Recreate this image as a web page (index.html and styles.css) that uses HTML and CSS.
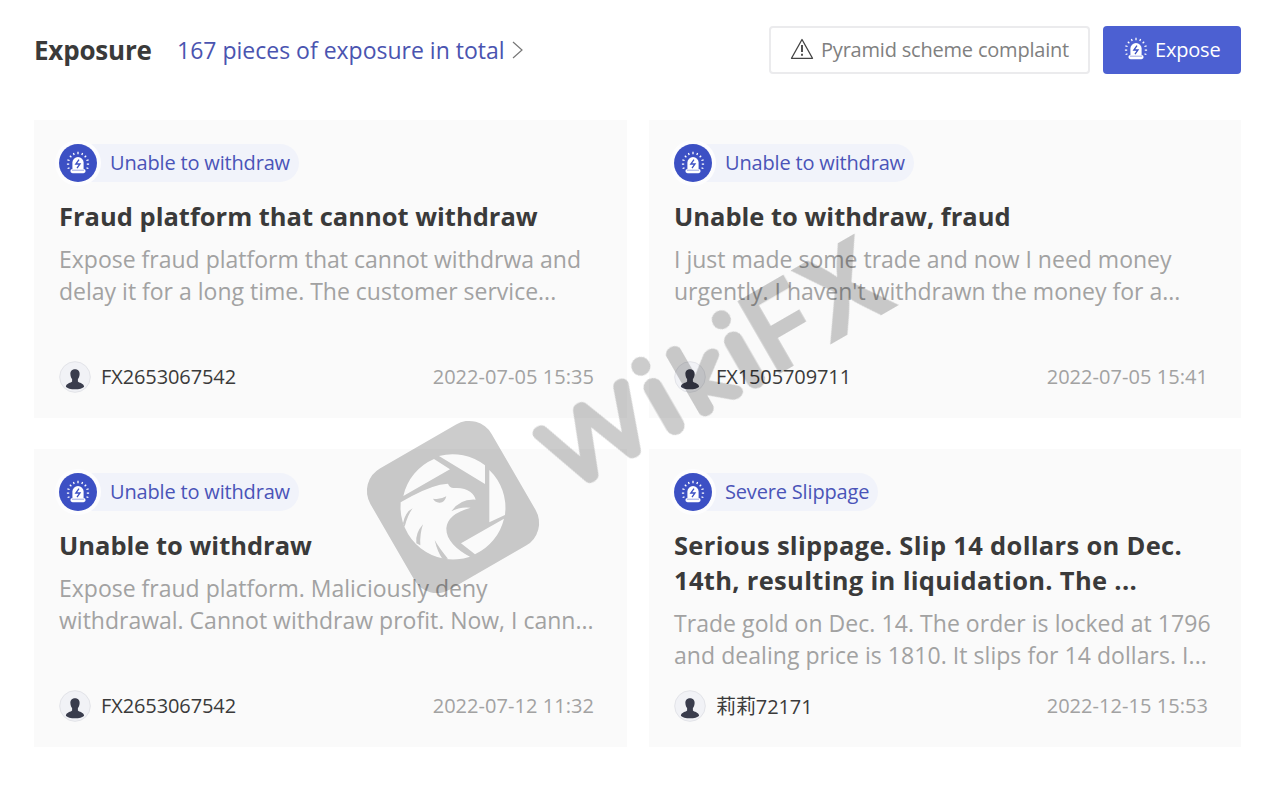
FILE: index.html
```
<!DOCTYPE html>
<html lang="en">
<head>
    <meta charset="UTF-8">
    <meta name="viewport" content="width=device-width, initial-scale=1.0">
    <title>Exposure</title>
    <link rel="stylesheet" href="styles.css">
</head>
<body>
    <svg class="sprite">
        <symbol id="alarm" viewBox="0 0 24 24">
            <path d="M6.400 18v-6.400a5.600 5.600 0 0 1 11.200 0V18z" fill="currentColor"/>
            <rect x="4.400" y="18" width="15.200" height="4.200" rx="2.100" fill="currentColor"/>
            <path d="M6 19.200h12" class="bolt" stroke-width=".5"/>
            <path d="M12 .8v2.400M7.400 1.900l.8 2M16.600 1.900l-.8 2M3.800 4.800l1.600 1.500M20.200 4.800l-1.600 1.500M1.400 8.800l2.200.7M22.600 8.800l-2.200.7M.9 13.200h2.300M23.100 13.200h-2.300M1.600 17.500l1.900-.7M22.400 17.500l-1.900-.7" stroke="currentColor" stroke-width="1.300"/>
            <path class="bolt" d="M13 8.600l-3.200 4.400h4.200l-3 4.200" fill="none" stroke-width="1.300"/>
        </symbol>
        <symbol id="user" viewBox="0 0 32 32">
            <circle cx="16" cy="16" r="15.300" fill="#f1f2f6" stroke="#e2e3e8"/>
            <path d="M16 8.200c3.200 0 4.800 2.200 4.600 5-.1 2.200-.8 3.700-1.700 4.900v2.400c1 1.500 6 1.600 6.200 5.300-2.400 3.400-15.800 3.400-18.200 0 .2-3.700 5.200-3.800 6.200-5.300v-2.400c-.9-1.200-1.600-2.700-1.700-4.900-.2-2.800 1.400-5 4.600-5z" fill="#3a3d4d"/>
        </symbol>
    </svg>

    <div class="page">
        <div class="header">
            <h1>Exposure</h1>
            <a class="total"><span>167 pieces of exposure in total</span>
                <svg width="14" height="20" viewBox="0 0 14 20"><path d="M2 2l9 8-9 8" fill="none" stroke="#777" stroke-width="1.200"/></svg>
            </a>
            <div class="btn complaint">
                <svg width="24" height="22" viewBox="0 0 24 22"><path d="M12 1.500L22.500 20.300h-21z" fill="none" stroke="#444" stroke-width="1.300" stroke-linejoin="round"/><path d="M12 7v7M12 15.800v2" stroke="#333" stroke-width="1.700"/></svg>
                <span>Pyramid scheme complaint</span>
            </div>
            <div class="btn expose">
                <svg class="alarm" width="24" height="24"><use href="#alarm"/></svg>
                <span>Expose</span>
            </div>
        </div>

        <div class="list">
            <div class="card">
                <div class="tag">
                    <i><svg class="alarm" width="24" height="24"><use href="#alarm"/></svg></i>
                    <span>Unable to withdraw</span>
                </div>
                <h2>Fraud platform that cannot withdraw</h2>
                <p>Expose fraud platform that cannot withdrwa and<br>delay it for a long time. The customer service...</p>
                <div class="foot">
                    <svg width="32" height="32"><use href="#user"/></svg>
                    <span class="name">FX2653067542</span>
                    <span class="time">2022-07-05 15:35</span>
                </div>
            </div>
            <div class="card">
                <div class="tag">
                    <i><svg class="alarm" width="24" height="24"><use href="#alarm"/></svg></i>
                    <span>Unable to withdraw</span>
                </div>
                <h2>Unable to withdraw, fraud</h2>
                <p>I just made some trade and now I need money<br>urgently. I haven't withdrawn the money for a...</p>
                <div class="foot">
                    <svg width="32" height="32"><use href="#user"/></svg>
                    <span class="name">FX1505709711</span>
                    <span class="time">2022-07-05 15:41</span>
                </div>
            </div>
            <div class="card">
                <div class="tag">
                    <i><svg class="alarm" width="24" height="24"><use href="#alarm"/></svg></i>
                    <span>Unable to withdraw</span>
                </div>
                <h2>Unable to withdraw</h2>
                <p>Expose fraud platform. Maliciously deny<br>withdrawal. Cannot withdraw profit. Now, I cann...</p>
                <div class="foot">
                    <svg width="32" height="32"><use href="#user"/></svg>
                    <span class="name">FX2653067542</span>
                    <span class="time">2022-07-12 11:32</span>
                </div>
            </div>
            <div class="card long">
                <div class="tag">
                    <i><svg class="alarm" width="24" height="24"><use href="#alarm"/></svg></i>
                    <span>Severe Slippage</span>
                </div>
                <h2>Serious slippage. Slip 14 dollars on Dec.<br>14th, resulting in liquidation. The ...</h2>
                <p>Trade gold on Dec. 14. The order is locked at 1796<br>and dealing price is 1810. It slips for 14 dollars. I...</p>
                <div class="foot">
                    <svg width="32" height="32"><use href="#user"/></svg>
                    <span class="name">莉莉72171</span>
                    <span class="time">2022-12-15 15:53</span>
                </div>
            </div>
        </div>
    </div>

    <svg class="watermark" width="660" height="490" viewBox="355 120 660 490">
        <mask id="eagle" maskUnits="userSpaceOnUse" x="355" y="400" width="200" height="210">
            <rect x="383" y="437" width="140" height="140" rx="26" fill="#fff" transform="rotate(-30 453 507)"/>
            <g transform="translate(360 410) scale(.3333)">
                <path d="M130 258A158 158 0 0 1 222 147L270 178zM237 138A158 158 0 0 1 375 166V222zM388 180A158 158 0 0 1 435 315L388 337zM432 326A158 158 0 0 1 345 433L303 400z"/>
                <path d="M122 277Q190 236 240 224L264 221Q270 235 282 234C322 231 343 250 347 269Q300 266 274 304Q300 289 332 293Q262 312 259 355C258 390 290 420 330 440A158 158 0 0 1 122 277z"/>
                <path d="M219 266Q240 270 259 259Q254 279 238 278Q224 277 219 266zM158 295Q136 306 129 340L134 350Q143 315 158 295zM189 343Q165 370 169 400L181 406Q179 372 189 343zM224 390Q232 425 248 448L264 446Q238 415 224 390z" fill="#fff"/>
            </g>
        </mask>
        <clipPath id="gap">
            <rect x="90" y="-60" width="129" height="130"/>
            <rect x="223.500" y="-13" width="19" height="63" rx="9.500"/>
            <rect x="250" y="-60" width="62" height="130"/>
            <rect x="316.500" y="-13" width="19" height="63" rx="9.500"/>
        </clipPath>
        <g class="ink">
            <rect x="355" y="400" width="200" height="210" mask="url(#eagle)"/>
            <g transform="translate(453 507) rotate(-30)">
                <g clip-path="url(#gap)">
                    <text class="wiki" y="42"><tspan x="109" textLength="101" lengthAdjust="spacingAndGlyphs">W</tspan><tspan class="stem" x="233" text-anchor="middle">i</tspan><tspan x="258" textLength="46" lengthAdjust="spacingAndGlyphs">k</tspan><tspan class="stem" x="326" text-anchor="middle">i</tspan></text>
                </g>
                <circle cx="233" cy="-28" r="9.500"/>
                <circle cx="326" cy="-28" r="9.500"/>
                <text class="fx" x="342" y="48" textLength="65" lengthAdjust="spacingAndGlyphs">F</text>
                <text class="fx" x="405" y="48" textLength="85" lengthAdjust="spacingAndGlyphs">X</text>
            </g>
        </g>
    </svg>
</body>
</html>
```

FILE: styles.css
```
* {
    box-sizing: border-box;
}

body {
    margin: 0;
    background: #fff;
    font-family: "Open Sans", "Noto Sans", "Noto Sans CJK SC", sans-serif;
    color: #3a3a3a;
}

.sprite {
    display: none;
}

.page {
    width: 1268px;
    height: 807px;
    padding: 26px 27px 0 34px;
    overflow: hidden;
}

.header {
    display: flex;
    align-items: center;
    height: 48px;
}

h1, h2, p {
    margin: 0;
}

h1 {
    width: 143px;
    font-size: 26px;
    font-weight: 700;
    letter-spacing: -.2px;
}

.total {
    display: flex;
    align-items: center;
    gap: 6px;
    margin-right: auto;
    font-size: 23px;
    color: #4a54b0;
}

.btn {
    display: flex;
    align-items: center;
    height: 48px;
    padding-bottom: 2px;
    border-radius: 4px;
    font-size: 20px;
    letter-spacing: -.2px;
    white-space: nowrap;
}

.complaint {
    width: 321px;
    margin-right: 13px;
    padding-left: 19px;
    gap: 7px;
    border: 2px solid #ebebed;
    color: #808080;
}

.expose {
    width: 138px;
    padding-left: 21px;
    gap: 7px;
    background: #4c60d2;
    color: #fff;
}

.alarm {
    color: #fff;
}

.bolt {
    stroke: #3c50c4;
}

.list {
    display: grid;
    grid-template-columns: 593px 592px;
    grid-template-rows: 298px 298px;
    gap: 31px 22px;
    margin-top: 46px;
}

.card {
    display: flex;
    flex-direction: column;
    padding: 24px 33px 25px 25px;
    background: #fafafa;
    white-space: nowrap;
}

.tag {
    display: flex;
    align-items: center;
    align-self: flex-start;
    height: 38px;
    padding-right: 9px;
    border-radius: 19px;
    background: #f1f3fa;
    font-size: 20px;
    letter-spacing: -.17px;
    color: #4a54b8;
}

.tag i {
    display: flex;
    align-items: center;
    justify-content: center;
    width: 38px;
    height: 38px;
    margin-right: 13px;
    border-radius: 50%;
    background: #3c50c4;
    box-shadow: 0 0 0 4px #fdfdfe;
}

.tag span,
.foot span {
    padding-bottom: 2px;
}

h2 {
    margin-top: 17px;
    font-size: 25.5px;
    font-weight: 700;
    line-height: 35px;
}

p {
    margin-top: 9px;
    font-size: 23px;
    line-height: 32px;
    color: #a2a2a2;
}

.long h2 {
    letter-spacing: .32px;
}

.long p {
    letter-spacing: .05px;
}

.foot {
    display: flex;
    align-items: center;
    margin-top: auto;
    font-size: 20px;
}

.name {
    margin: 0 auto 0 10px;
    letter-spacing: -.1px;
}

.time {
    color: #a2a2a2;
    letter-spacing: .05px;
}

.watermark {
    position: absolute;
    left: 355px;
    top: 120px;
}

.ink {
    opacity: .2;
}

.wiki {
    font-family: Lato, sans-serif;
    font-size: 90px;
    font-weight: 100;
    stroke: #000;
    stroke-width: 13px;
    stroke-linejoin: round;
}

.stem {
    stroke-width: 22px;
}

.fx {
    font-family: Inter, sans-serif;
    font-size: 115px;
    font-weight: 700;
}
```
